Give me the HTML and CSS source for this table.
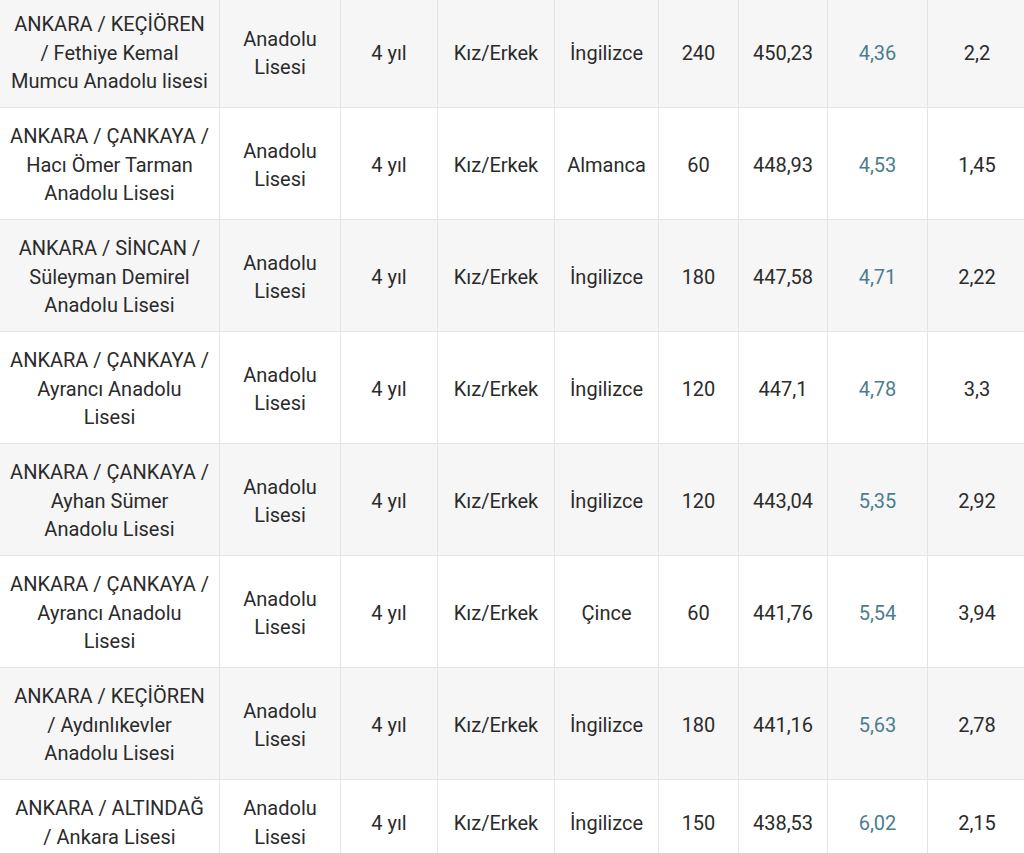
FILE: index.html
```html
<!DOCTYPE html>
<html lang="tr">
<head>
<meta charset="utf-8">
<title>Liseler</title>
<link rel="stylesheet" href="styles.css">
</head>
<body>
<div class="wrap">
<table class="schools">
<colgroup>
<col class="c-name"><col class="c-type"><col class="c-dur"><col class="c-sex"><col class="c-lang"><col class="c-quota"><col class="c-score"><col class="c-pct"><col class="c-last">
</colgroup>
<tbody>
<tr><td>ANKARA / KEÇİÖREN<br>/ Fethiye Kemal<br>Mumcu Anadolu lisesi</td><td>Anadolu<br>Lisesi</td><td>4 yıl</td><td>Kız/Erkek</td><td>İngilizce</td><td>240</td><td>450,23</td><td class="pct">4,36</td><td>2,2</td></tr>
<tr><td>ANKARA / ÇANKAYA /<br>Hacı Ömer Tarman<br>Anadolu Lisesi</td><td>Anadolu<br>Lisesi</td><td>4 yıl</td><td>Kız/Erkek</td><td>Almanca</td><td>60</td><td>448,93</td><td class="pct">4,53</td><td>1,45</td></tr>
<tr><td>ANKARA / SİNCAN /<br>Süleyman Demirel<br>Anadolu Lisesi</td><td>Anadolu<br>Lisesi</td><td>4 yıl</td><td>Kız/Erkek</td><td>İngilizce</td><td>180</td><td>447,58</td><td class="pct">4,71</td><td>2,22</td></tr>
<tr><td>ANKARA / ÇANKAYA /<br>Ayrancı Anadolu<br>Lisesi</td><td>Anadolu<br>Lisesi</td><td>4 yıl</td><td>Kız/Erkek</td><td>İngilizce</td><td>120</td><td>447,1</td><td class="pct">4,78</td><td>3,3</td></tr>
<tr><td>ANKARA / ÇANKAYA /<br>Ayhan Sümer<br>Anadolu Lisesi</td><td>Anadolu<br>Lisesi</td><td>4 yıl</td><td>Kız/Erkek</td><td>İngilizce</td><td>120</td><td>443,04</td><td class="pct">5,35</td><td>2,92</td></tr>
<tr><td>ANKARA / ÇANKAYA /<br>Ayrancı Anadolu<br>Lisesi</td><td>Anadolu<br>Lisesi</td><td>4 yıl</td><td>Kız/Erkek</td><td>Çince</td><td>60</td><td>441,76</td><td class="pct">5,54</td><td>3,94</td></tr>
<tr><td>ANKARA / KEÇİÖREN<br>/ Aydınlıkevler<br>Anadolu Lisesi</td><td>Anadolu<br>Lisesi</td><td>4 yıl</td><td>Kız/Erkek</td><td>İngilizce</td><td>180</td><td>441,16</td><td class="pct">5,63</td><td>2,78</td></tr>
<tr><td>ANKARA / ALTINDAĞ<br>/ Ankara Lisesi</td><td>Anadolu<br>Lisesi</td><td>4 yıl</td><td>Kız/Erkek</td><td>İngilizce</td><td>150</td><td>438,53</td><td class="pct">6,02</td><td>2,15</td></tr>
</tbody>
</table>
</div>
</body>
</html>
```

FILE: styles.css
```css
html, body {
  margin: 0;
  padding: 0;
  background: #ffffff;
}
body {
  overflow: hidden;
  font-family: Roboto, "Liberation Sans", sans-serif;
  color: #2b2b2b;
}
.wrap {
  width: 1024px;
  overflow: hidden;
}
.schools {
  border-collapse: collapse;
  table-layout: fixed;
  width: 1027px;
  margin: -5px 0 0 -1px;
  font-size: 20px;
  line-height: 28.5px;
}
.c-name { width: 220px; }
.c-type { width: 121px; }
.c-dur { width: 97px; }
.c-sex { width: 117px; }
.c-lang { width: 104px; }
.c-quota { width: 80px; }
.c-score { width: 89px; }
.c-pct { width: 100px; }
.c-last { width: 99px; }
.schools td {
  border: 1px solid #e4e4e4;
  padding: 14.25px 4px 11.25px;
  text-align: center;
  vertical-align: middle;
  white-space: nowrap;
}
.schools tr:nth-child(odd) td {
  background: #f6f6f6;
}
.schools td.pct {
  color: #4b7e8c;
}
```
